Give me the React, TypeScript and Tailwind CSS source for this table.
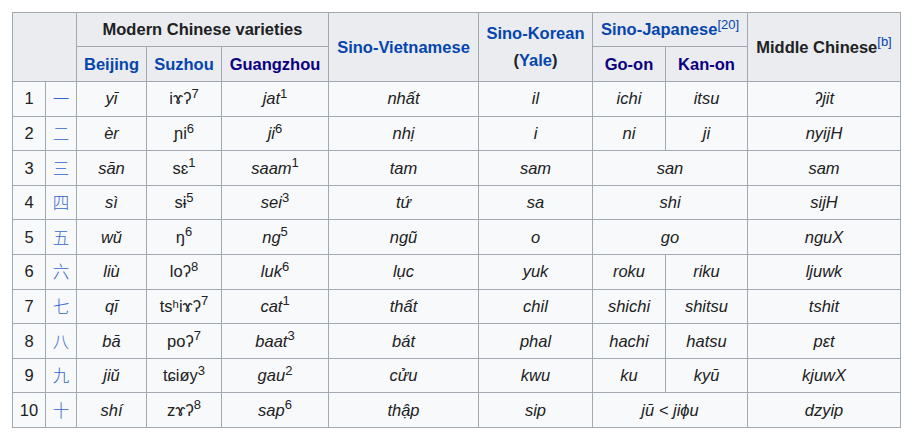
import React from "react";

type Row = {
  n: number;
  zi: string;
  bj: string;
  sz: [string, string];
  gz: [string, string];
  vi: string;
  ko: string;
  ja: [string, string] | string;
  mc: string;
};

const rows: Row[] = [
  { n: 1, zi: "一", bj: "yī", sz: ["iɤʔ", "7"], gz: ["jat", "1"], vi: "nhất", ko: "il", ja: ["ichi", "itsu"], mc: "ʔjit" },
  { n: 2, zi: "二", bj: "èr", sz: ["ɲi", "6"], gz: ["ji", "6"], vi: "nhị", ko: "i", ja: ["ni", "ji"], mc: "nyijH" },
  { n: 3, zi: "三", bj: "sān", sz: ["sɛ", "1"], gz: ["saam", "1"], vi: "tam", ko: "sam", ja: "san", mc: "sam" },
  { n: 4, zi: "四", bj: "sì", sz: ["sɨ", "5"], gz: ["sei", "3"], vi: "tứ", ko: "sa", ja: "shi", mc: "sijH" },
  { n: 5, zi: "五", bj: "wǔ", sz: ["ŋ", "6"], gz: ["ng", "5"], vi: "ngũ", ko: "o", ja: "go", mc: "nguX" },
  { n: 6, zi: "六", bj: "liù", sz: ["loʔ", "8"], gz: ["luk", "6"], vi: "lục", ko: "yuk", ja: ["roku", "riku"], mc: "ljuwk" },
  { n: 7, zi: "七", bj: "qī", sz: ["tsʰiɤʔ", "7"], gz: ["cat", "1"], vi: "thất", ko: "chil", ja: ["shichi", "shitsu"], mc: "tshit" },
  { n: 8, zi: "八", bj: "bā", sz: ["poʔ", "7"], gz: ["baat", "3"], vi: "bát", ko: "phal", ja: ["hachi", "hatsu"], mc: "pɛt" },
  { n: 9, zi: "九", bj: "jiǔ", sz: ["tɕiøy", "3"], gz: ["gau", "2"], vi: "cửu", ko: "kwu", ja: ["ku", "kyū"], mc: "kjuwX" },
  { n: 10, zi: "十", bj: "shí", sz: ["zɤʔ", "8"], gz: ["sap", "6"], vi: "thập", ko: "sip", ja: "jū < jiɸu", mc: "dzyip" },
];

const widths = [33, 31, 70, 75, 107, 150, 114, 73, 82, 153];

const th = "border border-[#a2a9b1] bg-[#eaecf0] px-[6px] text-center font-bold";
const td = "border border-[#a2a9b1] px-[6px] text-center";

function Sup({ children, className = "" }: { children: React.ReactNode; className?: string }) {
  return <sup className={`text-[13px] leading-none not-italic ${className}`}>{children}</sup>;
}

export default function App() {
  return (
    <div className="min-h-screen bg-white pl-3 pt-3 font-['Liberation_Sans',Arial,sans-serif] text-[16.5px] text-[#202122]">
      <table className="w-[888px] table-fixed border-collapse bg-[#f8f9fa]">
        <colgroup>
          {widths.map((w, i) => (
            <col key={i} style={{ width: w }} />
          ))}
        </colgroup>
        <thead>
          <tr className="h-[34px]">
            <th rowSpan={2} colSpan={2} className={th}></th>
            <th colSpan={3} className={th}>Modern Chinese varieties</th>
            <th rowSpan={2} className={`${th} text-[#0645ad]`}>Sino-Vietnamese</th>
            <th rowSpan={2} className={`${th} leading-[1.65]`}>
              <span className="text-[#0645ad]">Sino-Korean</span>
              <br />(<span className="text-[#0645ad]">Yale</span>)
            </th>
            <th colSpan={2} className={`${th} text-[#0645ad]`}>
              Sino-Japanese<Sup className="font-normal">[20]</Sup>
            </th>
            <th rowSpan={2} className={th}>
              Middle Chinese<Sup className="font-normal text-[#0645ad]">[b]</Sup>
            </th>
          </tr>
          <tr className="h-[35px]">
            <th className={`${th} text-[#0645ad]`}>Beijing</th>
            <th className={`${th} text-[#0645ad]`}>Suzhou</th>
            <th className={`${th} text-[#0b0080]`}>Guangzhou</th>
            <th className={`${th} text-[#0b0080]`}>Go-on</th>
            <th className={`${th} text-[#0b0080]`}>Kan-on</th>
          </tr>
        </thead>
        <tbody>
          {rows.map((r) => (
            <tr key={r.n} className="h-[34.6px]">
              <td className={td}>{r.n}</td>
              <td className={`${td} font-['Noto_Sans_CJK_SC',sans-serif] font-light text-[#3366cc]`}>{r.zi}</td>
              <td className={`${td} italic`}>{r.bj}</td>
              <td className={td}>
                {r.sz[0]}
                <Sup>{r.sz[1]}</Sup>
              </td>
              <td className={`${td} italic`}>
                {r.gz[0]}
                <Sup>{r.gz[1]}</Sup>
              </td>
              <td className={`${td} italic`}>{r.vi}</td>
              <td className={`${td} italic`}>{r.ko}</td>
              {typeof r.ja === "string" ? (
                <td colSpan={2} className={`${td} italic`}>{r.ja}</td>
              ) : (
                <>
                  <td className={`${td} italic`}>{r.ja[0]}</td>
                  <td className={`${td} italic`}>{r.ja[1]}</td>
                </>
              )}
              <td className={`${td} italic`}>{r.mc}</td>
            </tr>
          ))}
        </tbody>
      </table>
    </div>
  );
}
